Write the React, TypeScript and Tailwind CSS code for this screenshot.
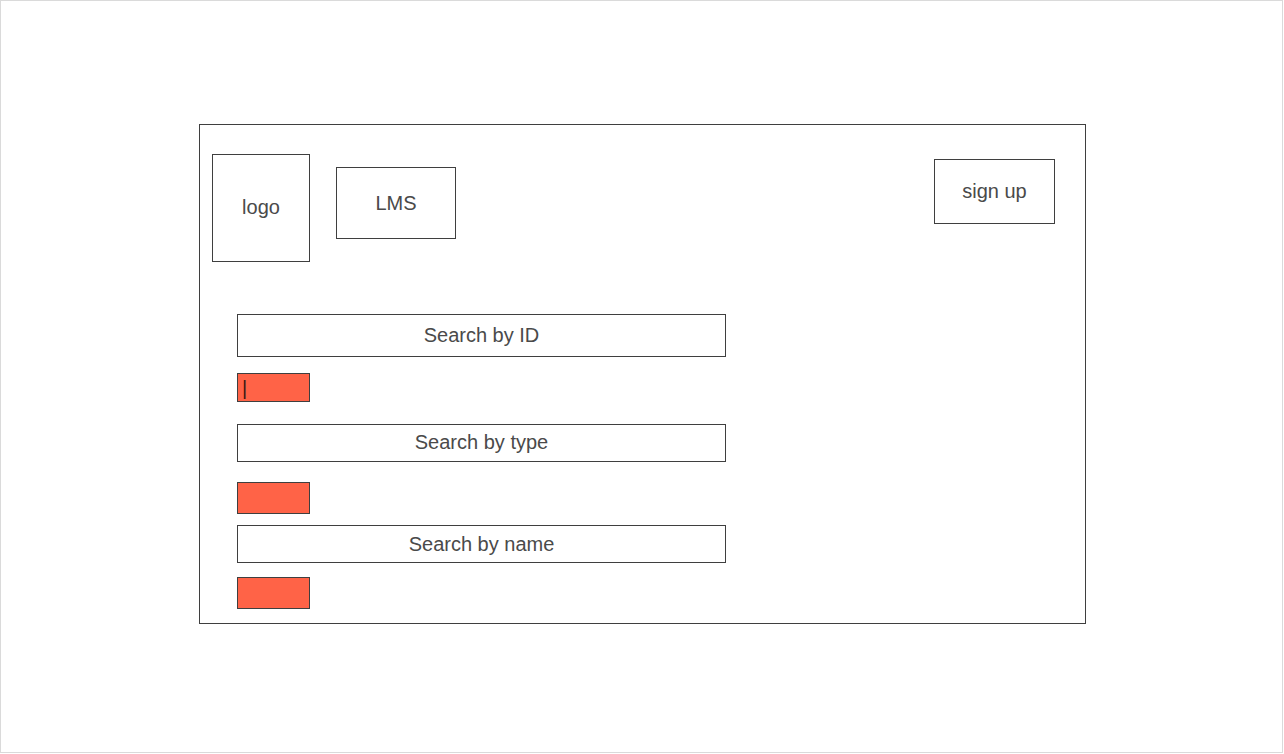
export default function App() {
  const box = "border border-[#3f3f3f] flex items-center justify-center text-[20px] text-[#4a4a4a]";
  const red = "w-[73px] border border-[#3f3f3f] bg-[#ff6347]";

  return (
    <main
      className="w-[1284px] h-[754px] bg-white overflow-hidden"
      style={{ fontFamily: '"Liberation Sans", Arial, sans-serif' }}
    >
      <div className="w-[1283px] h-[753px] border border-[#dadada] pt-[123px] pl-[198px]">
        {/* Frame */}
        <div className="w-[887px] h-[500px] border border-[#3f3f3f] flex flex-col">
          {/* Header */}
          <div className="flex items-start pt-[29px] pl-[12px] pr-[30px]">
            <div className={`${box} w-[98px] h-[108px] pb-[2px]`}>logo</div>
            <div className={`${box} w-[120px] h-[72px] mt-[13px] ml-[26px]`}>LMS</div>
            <div className={`${box} w-[121px] h-[65px] mt-[5px] ml-auto pb-[2px]`}>sign up</div>
          </div>

          {/* Search fields */}
          <div className="flex flex-col pl-[37px] mt-[52px]">
            <div className={`${box} w-[489px] h-[43px] pb-[2px]`}>Search by ID</div>
            <div className={`${red} h-[29px] mt-[16px] flex items-center pl-[4px] text-[20px] leading-none text-[#3a1a14]`}>
              |
            </div>
            <div className={`${box} w-[489px] h-[38px] mt-[22px] pb-[2px]`}>Search by type</div>
            <div className={`${red} h-[32px] mt-[20px]`} />
            <div className={`${box} w-[489px] h-[38px] mt-[11px]`}>Search by name</div>
            <div className={`${red} h-[32px] mt-[14px]`} />
          </div>
        </div>
      </div>
    </main>
  );
}
